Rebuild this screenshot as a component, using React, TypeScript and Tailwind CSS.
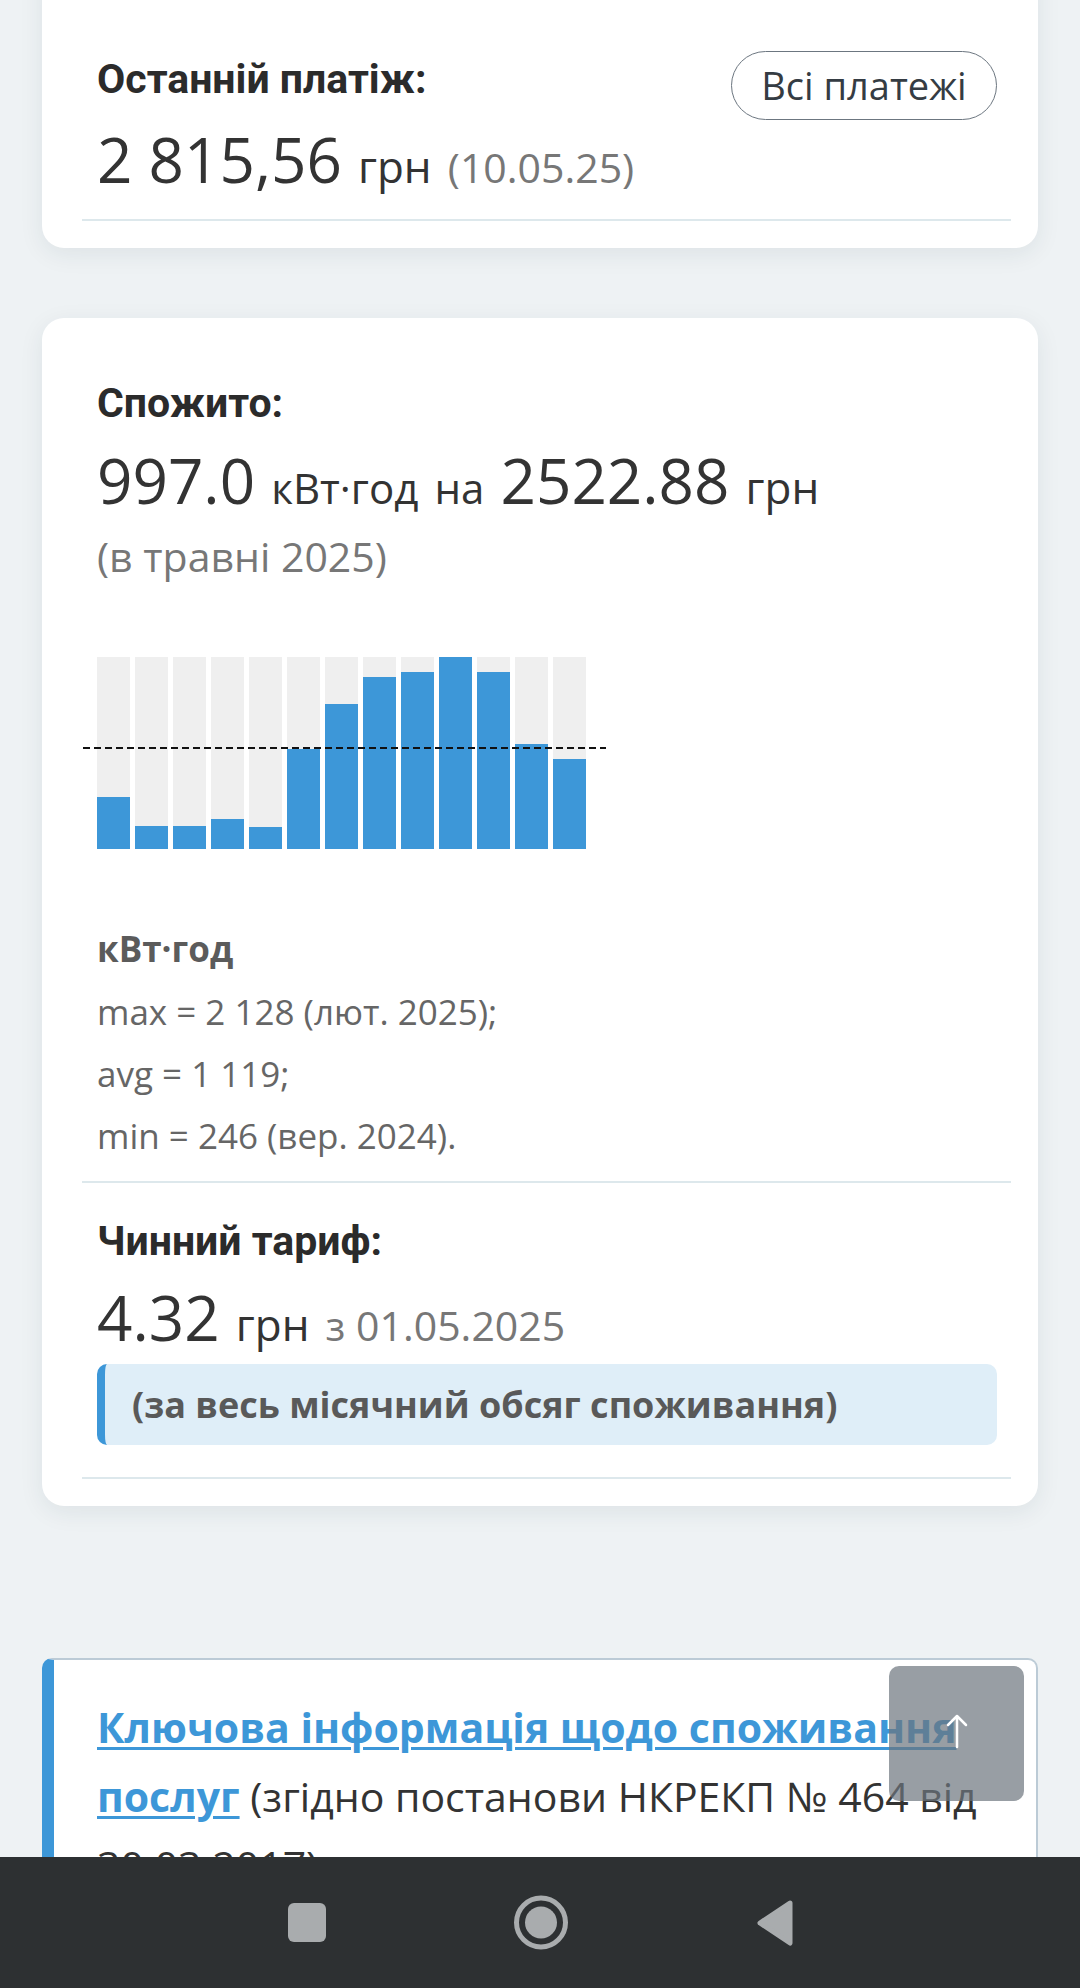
const usage = [576, 255, 255, 332, 246, 1108, 1607, 1906, 1962, 2128, 1962, 1164, 997];
const maxUsage = 2128;
const avgUsage = 1119;
const chartHeight = 192;

function Heading({ children }: { children: React.ReactNode }) {
  return (
    <h2 className="font-['Roboto',sans-serif] text-[41px] font-bold leading-[48px] text-[#2b2b2b]">
      {children}
    </h2>
  );
}

function Divider() {
  return <div className="-ml-[15px] -mr-[14px] h-[2px] bg-[#dde8ec]" />;
}

function PaymentCard() {
  return (
    <section className="-mt-[40px] rounded-[22px] bg-white pb-[27px] pl-[55px] pr-[41px] pt-[91px] shadow-[0_6px_24px_rgba(20,50,70,0.08)]">
      <div className="flex items-start justify-between">
        <div className="mt-[4px]">
          <Heading>Останній платіж:</Heading>
        </div>
        <button className="flex h-[69px] w-[266px] items-center justify-center rounded-full border-[1.5px] border-[#6c7680] text-[38px] text-[#353c43]">
          Всі платежі
        </button>
      </div>
      <p className="mt-[3px] text-[62px] leading-[72px] text-[#333]">
        2 815,56 <span className="text-[44px] leading-none">грн</span>{" "}
        <span className="text-[41px] leading-none text-[#777]">(10.05.25)</span>
      </p>
      <div className="mt-[24px]">
        <Divider />
      </div>
    </section>
  );
}

function UsageChart() {
  const scale = chartHeight / maxUsage;
  return (
    <div className="relative mt-[73px] flex h-[192px] items-end gap-[5px]">
      {usage.map((v, i) => (
        <div key={i} className="flex h-full w-[33px] items-end bg-[#efefef]">
          <div className="w-full bg-[#3d97d8]" style={{ height: Math.round(v * scale) }} />
        </div>
      ))}
      <svg
        className="absolute -left-[14px]"
        style={{ top: chartHeight - Math.round(avgUsage * scale) - 1 }}
        width="523"
        height="2"
      >
        <line x1="0" y1="1" x2="523" y2="1" stroke="#111" strokeWidth="2" strokeDasharray="7 4" />
      </svg>
    </div>
  );
}

function ConsumptionCard() {
  return (
    <section className="mt-[70px] rounded-[22px] bg-white pb-[27px] pl-[55px] pr-[41px] pt-[61px] shadow-[0_6px_24px_rgba(20,50,70,0.08)]">
      <Heading>Спожито:</Heading>
      <p className="mt-[17px] text-[62px] leading-[72px] text-[#333]">
        997.0 <span className="text-[42px] leading-none">кВт·год</span>{" "}
        <span className="text-[42px] leading-none">на</span> 2522.88{" "}
        <span className="text-[44px] leading-none">грн</span>
      </p>
      <p className="mt-[12px] text-[41px] leading-[56px] text-[#777]">(в травні 2025)</p>

      <UsageChart />

      <p className="mt-[76px] text-[35px] font-bold leading-[48px] text-[#5b5b5b]">кВт·год</p>
      <div className="mt-[8px] text-[35px] leading-[62px] text-[#666]">
        <p>max = 2 128 (лют. 2025);</p>
        <p>avg = 1 119;</p>
        <p>min = 246 (вер. 2024).</p>
      </div>
      <div className="mt-[14px]">
        <Divider />
      </div>

      <div className="mt-[34px]">
        <Heading>Чинний тариф:</Heading>
      </div>
      <p className="mt-[16px] text-[62px] leading-[72px] text-[#333]">
        4.32 <span className="text-[44px] leading-none">грн</span>{" "}
        <span className="text-[41px] leading-none text-[#777]">з 01.05.2025</span>
      </p>
      <div className="mt-[11px] flex h-[81px] items-center rounded-[10px] border-l-[8px] border-[#3d97d8] bg-[#dfeef8] pl-[27px] text-[36px] font-bold text-[#595959]">
        (за весь місячний обсяг споживання)
      </div>
      <div className="mt-[32px]">
        <Divider />
      </div>
    </section>
  );
}

function KeyInfoCard() {
  return (
    <section className="mt-[152px] h-[400px] rounded-[10px] border-2 border-l-[12px] border-[#bccbd6] border-l-[#3d97d8] bg-white pl-[43px] pr-[38px] pt-[33px]">
      <p className="text-[41px] leading-[69px] text-[#333]">
        <a className="font-bold text-[#3d97d8] underline decoration-[3px] underline-offset-[4px]">
          Ключова інформація щодо споживання послуг
        </a>{" "}
        (згідно постанови НКРЕКП № 464 від 30.03.2017)
      </p>
    </section>
  );
}

function NavBar() {
  return (
    <div className="absolute bottom-0 left-0 flex h-[131px] w-full items-center justify-center gap-[188px] bg-[#2d3032]">
      <div className="h-[39px] w-[38px] rounded-[6px] bg-[#a9acae]" />
      <svg width="54" height="55" viewBox="0 0 54 55">
        <circle cx="27" cy="27.5" r="24.5" fill="none" stroke="#a9acae" strokeWidth="5" />
        <circle cx="27" cy="27.5" r="16" fill="#a9acae" />
      </svg>
      <svg width="37" height="46" viewBox="0 0 37 46">
        <path d="M34 3 L4 23 L34 43 Z" fill="#a9acae" stroke="#a9acae" strokeWidth="5" strokeLinejoin="round" />
      </svg>
    </div>
  );
}

export default function App() {
  return (
    <div className="relative h-[1988px] w-[1080px] overflow-hidden bg-[#eef2f4] font-['Open_Sans',sans-serif]">
      <div className="px-[42px]">
        <PaymentCard />
        <ConsumptionCard />
        <KeyInfoCard />
      </div>

      <button className="absolute left-[889px] top-[1666px] flex h-[135px] w-[135px] items-center justify-center rounded-[10px] bg-[#6c757d]/70">
        <svg width="24" height="36" viewBox="0 0 24 36" className="-mt-[6px]">
          <path d="M12 34 V3 M3 12 L12 3 L21 12" fill="none" stroke="#fff" strokeWidth="2.5" strokeLinecap="round" strokeLinejoin="round" />
        </svg>
      </button>

      <NavBar />
    </div>
  );
}
